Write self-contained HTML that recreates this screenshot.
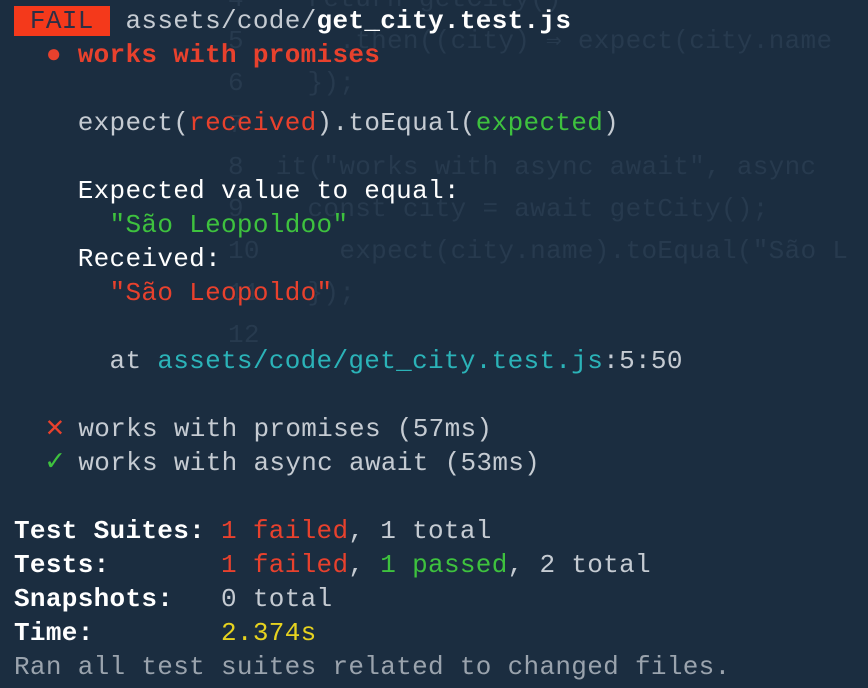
<!DOCTYPE html>
<html><head><meta charset="utf-8"><style>
html,body{margin:0;padding:0;width:868px;height:688px;overflow:hidden;background:#1b2d40}
.g{position:absolute;font-family:"Liberation Mono",monospace;font-size:26px;letter-spacing:0.3px;color:#273a4e;white-space:pre;line-height:42px}
.t{position:absolute;left:14px;top:4px;font-family:"Liberation Mono",monospace;font-size:26px;letter-spacing:0.32px;line-height:34px;color:#c5cbd2;white-space:pre}
.w{color:#fff;font-weight:bold}
.r{color:#e8412d}.gr{color:#3ec23e}.c{color:#2bb3b8}.y{color:#e6d21f}
.fail{background:#f4391b;color:#2b2f45}
.b{font-weight:bold}
.x{font-size:30px;line-height:30px;letter-spacing:-1.5px}
</style></head><body>
<div class="g" style="left:228px;top:-22px">4    return getCity()
5      .then((city) ⇒ expect(city.name
6    });
7
8  it("works with async await", async
9    const city = await getCity();
10     expect(city.name).toEqual("São L
11   });
12</div>
<div class="t"><span class="fail"> FAIL </span> assets/code/<span class="w">get_city.test.js</span>
  <span class="r b">● works with promises</span>

    expect(<span class="r">received</span>).toEqual(<span class="gr">expected</span>)

    <span style="color:#fff">Expected value to equal:</span>
      <span class="gr">"São Leopoldoo"</span>
    <span style="color:#fff">Received:</span>
      <span class="r">"São Leopoldo"</span>

      at <span class="c">assets/code/get_city.test.js</span>:5:50

  <span class="r x">✕</span> works with promises (57ms)
  <span class="gr x">✓</span> works with async await (53ms)

<span class="w">Test Suites: </span><span class="r">1 failed</span>, 1 total
<span class="w">Tests:       </span><span class="r">1 failed</span>, <span class="gr">1 passed</span>, 2 total
<span class="w">Snapshots:   </span>0 total
<span class="w">Time:        </span><span class="y">2.374s</span>
<span style="color:#9aa3ad">Ran all test suites related to changed files.</span></div>
</body></html>
